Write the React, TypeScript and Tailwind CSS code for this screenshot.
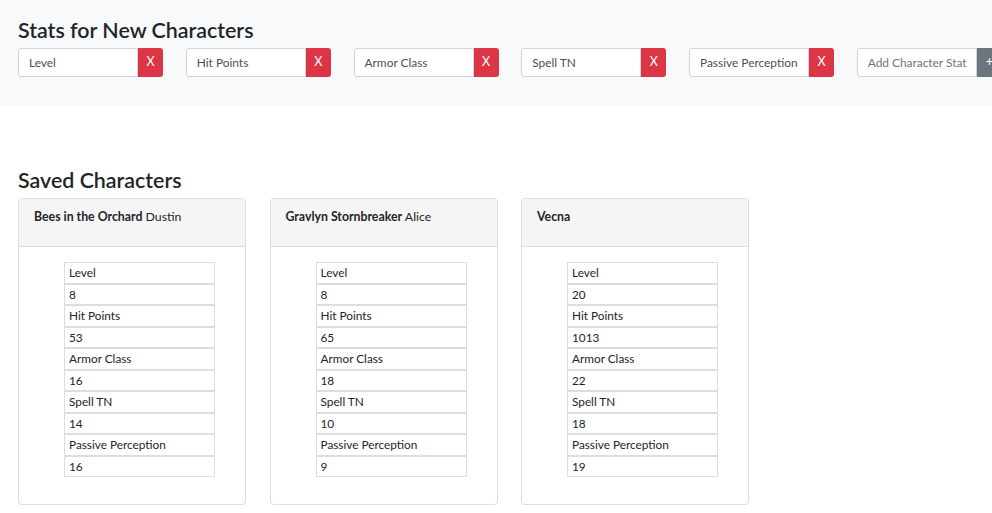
import { useState } from "react";

interface Character {
  name: string;
  player: string;
  stats: number[];
}

const statNames = ["Level", "Hit Points", "Armor Class", "Spell TN", "Passive Perception"];

const characters: Character[] = [
  { name: "Bees in the Orchard", player: "Dustin", stats: [8, 53, 16, 14, 16] },
  { name: "Gravlyn Stornbreaker", player: "Alice", stats: [8, 65, 18, 10, 9] },
  { name: "Vecna", player: "", stats: [20, 1013, 22, 18, 19] },
];

function StatInput({ label }: { label: string }) {
  return (
    <div className="flex shrink-0">
      <div className="w-[120px] h-[29px] flex items-center pl-[10px] bg-white border border-[#ced4da] rounded-l-[3px] text-[11.9px] text-[#495057] whitespace-nowrap overflow-hidden">
        {label}
      </div>
      <button className="w-[25px] h-[29px] bg-[#dc3545] text-white text-[12.5px] rounded-r-[3px] flex items-center justify-center">
        X
      </button>
    </div>
  );
}

function CharacterCard({ character }: { character: Character }) {
  return (
    <div className="w-[228px] shrink-0 border border-[#dddddd] rounded-[4px] bg-white">
      <div className="h-[48px] bg-[#f5f5f5] border-b border-[#dddddd] rounded-t-[4px] px-[15px] pt-[9px] text-[12.3px] text-[#212529]">
        <span className="font-bold">{character.name}</span>
        {character.player && <span> {character.player}</span>}
      </div>
      <div className="pt-[15px] pb-[27px] pl-[45px]">
        <div className="w-[151px] flex flex-col">
          {statNames.map((name, i) => (
            <div key={name}>
              <div className="h-[21.5px] border border-[#dddddd] pl-[4px] pt-[1px] flex items-center text-[11.8px] text-[#212529]">
                {name}
              </div>
              <div className="h-[21.5px] border border-[#dddddd] pl-[4px] pt-[1px] flex items-center text-[11.8px] text-[#212529]">
                {character.stats[i]}
              </div>
            </div>
          ))}
        </div>
      </div>
    </div>
  );
}

export default function App() {
  const [newStat] = useState("");
  return (
    <div className="w-[992px] h-[513px] overflow-hidden bg-white font-['Lato',sans-serif] text-[#212529]">
      <div className="bg-[#f8f9fa] h-[106px] px-[18px] pt-[17px]">
        <h4 className="text-[21.4px] leading-[26px] font-semibold">Stats for New Characters</h4>
        <div className="flex gap-[22.75px] mt-[5px]">
          {statNames.map((s) => (
            <StatInput key={s} label={s} />
          ))}
          <div className="flex shrink-0">
            <div className="w-[120px] h-[29px] flex items-center pl-[10px] bg-white border border-[#ced4da] rounded-l-[3px] text-[11.9px] text-[#6c757d] whitespace-nowrap overflow-hidden">
              {newStat || "Add Character Stat"}
            </div>
            <button className="w-[25px] h-[29px] bg-[#6c757d] text-white text-[12.5px] rounded-r-[3px] flex items-center justify-center">
              +
            </button>
          </div>
        </div>
      </div>
      <div className="px-[18px] pt-[61px]">
        <h4 className="text-[21.4px] leading-[26px] font-semibold">Saved Characters</h4>
        <div className="flex gap-[23.5px] mt-[5px]">
          {characters.map((c) => (
            <CharacterCard key={c.name} character={c} />
          ))}
        </div>
      </div>
    </div>
  );
}
